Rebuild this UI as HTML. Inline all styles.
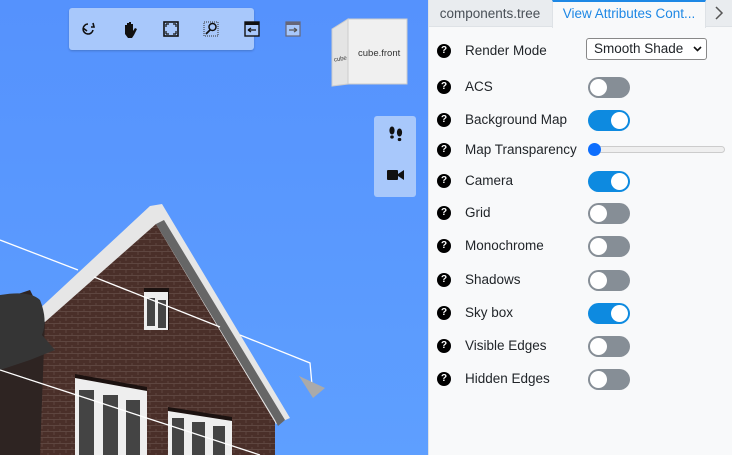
<!DOCTYPE html>
<html><head><meta charset="utf-8">
<style>
*{box-sizing:border-box;margin:0;padding:0}
body{width:732px;height:455px;overflow:hidden;font-family:"Liberation Sans",sans-serif;position:relative;background:#fff}
#vp{position:absolute;left:0;top:0;width:428px;height:455px;background:linear-gradient(#5592fd,#5e9fff);overflow:hidden}
#panel{position:absolute;left:428px;top:0;width:304px;height:455px;background:#f8f9fa;border-left:1px solid #dee2e6}
.tb{position:absolute;left:69px;top:8px;width:185px;height:42px;background:#a8c8fb;border-radius:3px;box-shadow:0 1px 2px rgba(0,0,0,.2)}
.tb svg{position:absolute;top:13px}
.side{position:absolute;left:374px;top:116px;width:42px;height:81px;background:#a8c8fb;border-radius:3px}
.tabs{height:27px;position:relative;border-bottom:1px solid #dee2e6;background:#e9ecef}
.tab1{position:absolute;left:0;top:0;width:122px;height:27px;font-size:13.5px;color:#495057;text-align:center;line-height:27px}
.tab2{position:absolute;left:123px;top:0;width:154px;height:28px;background:#f8f9fa;border-top:2px solid #1e88e5;border-left:1px solid #dee2e6;border-right:1px solid #dee2e6;font-size:13.5px;color:#1e88e5;text-align:center;line-height:24px}
.arr{position:absolute;left:285px;top:5px}
.row{position:absolute;left:0;width:304px;height:22px}
.q{position:absolute;left:8px;top:4px;width:14px;height:14px;border-radius:50%;background:#000;color:#fff;font-size:10px;font-weight:bold;text-align:center;line-height:14px}
.lb{position:absolute;left:36px;top:3px;font-size:13.5px;color:#212529}
.tg{position:absolute;left:159px;top:1px;width:42px;height:21px;border-radius:11px;background:#868e96}
.tg::after{content:"";position:absolute;left:2px;top:2px;width:17px;height:17px;border-radius:50%;background:#fff}
.tg.on{background:#0d8ae0}
.tg.on::after{left:23px}
.sel{position:absolute;left:157px;top:-2px;width:121px;height:22px;border:1px solid #888;border-radius:3px;background:#fff;font-size:13.5px;line-height:20px;padding-left:7px;color:#212529}
</style></head><body>
<div id="vp">
<svg width="428" height="455" style="position:absolute;left:0;top:0">
<defs>
<pattern id="br" width="12" height="6" patternUnits="userSpaceOnUse">
<rect width="12" height="6" fill="#4a2f29"/>
<path d="M0 5.5H12M6 0V3M0 3V6M12 3V6" stroke="#5e4640" stroke-width="1"/>
</pattern>
</defs>
<polygon points="155,218 45,320 30,455 275,455 275,420" fill="url(#br)"/>
<polygon points="0,300 30,290 45,320 40,455 0,455" fill="#2e2422"/>
<polygon points="150,206 162,204 290,418 276,424 156,224 45,322 36,312" fill="#e6e6e6"/>
<polygon points="156,224 164,220 285,420 278,426 275,420" fill="#666"/>
<path d="M0 295 Q30 290 40 300 Q48 320 42 335 L55 350 L30 360 L0 370Z" fill="#353535"/>
<g>
<rect x="144" y="288" width="25" height="42" fill="#1c1210"/>
<rect x="144" y="292" width="24" height="38" fill="#eee"/>
<rect x="147" y="298" width="8" height="28" fill="#444"/><rect x="158" y="300" width="8" height="28" fill="#444"/>
</g>
<g>
<polygon points="75,377 147,390 147,455 75,455" fill="#eee"/>
<polygon points="75,374 147,387 147,391 75,378" fill="#1c1210"/>
<rect x="79" y="390" width="15" height="65" fill="#444"/><rect x="103" y="395" width="15" height="60" fill="#444"/><rect x="126" y="400" width="14" height="55" fill="#444"/>
<polygon points="168,410 232,420 232,455 168,455" fill="#eee"/>
<polygon points="168,407 232,417 232,421 168,411" fill="#1c1210"/>
<rect x="172" y="418" width="12" height="37" fill="#444"/><rect x="192" y="422" width="13" height="33" fill="#444"/><rect x="213" y="426" width="12" height="29" fill="#444"/>
</g>
<polyline points="0,240 78,270" stroke="#fff" stroke-width="1.3" fill="none"/>
<polyline points="94,277 220,327" stroke="#fff" stroke-width="1.3" fill="none"/>
<polyline points="240,335 310,363 312,385" stroke="#fff" stroke-width="1.3" fill="none"/>
<polyline points="0,370 260,455" stroke="#fff" stroke-width="1.3" fill="none"/>
<polygon points="299,376 325,388 313,398" fill="#aaa"/>
</svg>
<div class="tb">
<svg style="left:12px" width="16" height="16" viewBox="0 0 16 16"><path d="M7 3a5 5 0 1 0 5 6M2 7l4 3M12 2l1 4-3 0" stroke="#111" stroke-width="1.6" fill="none"/></svg>
<svg style="left:53px" width="16" height="17" viewBox="0 0 16 17"><path d="M3 9V4h2v4V2h2v6V1h2v7V3h2v7l2-3 2 1-3 6-2 3H6L3 13z" fill="#111"/></svg>
<svg style="left:94px" width="16" height="16" viewBox="0 0 16 16"><rect x="1" y="1" width="14" height="14" fill="none" stroke="#111" stroke-width="1.6"/><path d="M3 3h3M3 3v3M13 3h-3M13 3v3M3 13h3M3 13v-3M13 13h-3M13 13v-3" stroke="#111" stroke-width="1.2"/></svg>
<svg style="left:134px" width="16" height="16" viewBox="0 0 16 16"><rect x="1" y="1" width="14" height="14" fill="none" stroke="#333" stroke-dasharray="1 1"/><circle cx="9.5" cy="6" r="3.5" fill="none" stroke="#111" stroke-width="1.5"/><path d="M7 9L3 13" stroke="#111" stroke-width="1.8"/></svg>
<svg style="left:175px" width="16" height="16" viewBox="0 0 16 16"><rect x="1" y="1" width="14" height="14" fill="#a8c8fb" stroke="#111" stroke-width="1.4"/><rect x="1" y="1" width="14" height="3" fill="#111"/><path d="M4 9h8M4 9l3-2M4 9l3 2" stroke="#111" stroke-width="1.3"/></svg>
<svg style="left:216px" width="16" height="16" viewBox="0 0 16 16"><rect x="1" y="1" width="14" height="14" fill="#a8c8fb" stroke="#667" stroke-width="1.2"/><rect x="1" y="1" width="14" height="3" fill="#667"/><path d="M4 9h8M12 9l-3-2M12 9l-3 2" stroke="#555" stroke-width="1.3"/></svg>
</div>
<svg style="position:absolute;left:330px;top:17px" width="90" height="70">
<polygon points="2,12 18,2 18,67 2,69" fill="#e4e4e4" stroke="#ccc"/>
<rect x="18" y="2" width="59" height="65" fill="#f0f0f0" stroke="#ccc"/>
<text x="28" y="39" font-family="Liberation Sans" font-size="9.5" fill="#333">cube.front</text>
<text x="4" y="44" font-family="Liberation Sans" font-size="6" fill="#333" transform="rotate(-10 8 43)">cube</text>
</svg>
<div class="side">
<svg style="position:absolute;left:14px;top:10px" width="16" height="16" viewBox="0 0 16 16"><ellipse cx="4" cy="4.5" rx="2.6" ry="4" fill="#111"/><ellipse cx="11.5" cy="6.5" rx="2.6" ry="4" fill="#111"/><ellipse cx="4" cy="11" rx="1.8" ry="1.6" fill="#111"/><ellipse cx="11.5" cy="13.5" rx="1.8" ry="1.6" fill="#111"/></svg>
<svg style="position:absolute;left:13px;top:53px" width="17" height="12" viewBox="0 0 17 12"><rect x="0" y="1" width="11" height="10" rx="1" fill="#111"/><polygon points="11,5 17,1 17,11 11,7" fill="#111"/></svg>
</div>
</div>
<div id="panel">
<div class="tabs"><div class="tab1">components.tree</div><div class="tab2">View Attributes Cont...</div>
<svg class="arr" width="10" height="16" viewBox="0 0 10 16"><path d="M2 2l6 6-6 6" stroke="#555" stroke-width="1.5" fill="none"/></svg></div>
<div class="row" style="top:40px"><div class="q">?</div><div class="lb">Render Mode</div><div class="sel">Smooth Shade <svg style="position:absolute;right:4px;top:7px" width="9" height="6" viewBox="0 0 9 6"><path d="M1 1l3.5 3.5L8 1" stroke="#111" stroke-width="1.6" fill="none"/></svg></div></div>
<div class="row" style="top:76px"><div class="q">?</div><div class="lb">ACS</div><div class="tg"></div></div>
<div class="row" style="top:109px"><div class="q">?</div><div class="lb">Background Map</div><div class="tg on"></div></div>
<div class="row" style="top:139px"><div class="q">?</div><div class="lb">Map Transparency</div>
<div style="position:absolute;left:162px;top:7px;width:134px;height:7px;border:1px solid #ccc;border-radius:4px;background:#efefef"></div>
<div style="position:absolute;left:159px;top:4px;width:13px;height:13px;border-radius:50%;background:#0d6efd"></div></div>
<div class="row" style="top:170px"><div class="q">?</div><div class="lb">Camera</div><div class="tg on"></div></div>
<div class="row" style="top:202px"><div class="q">?</div><div class="lb">Grid</div><div class="tg"></div></div>
<div class="row" style="top:235px"><div class="q">?</div><div class="lb">Monochrome</div><div class="tg"></div></div>
<div class="row" style="top:269px"><div class="q">?</div><div class="lb">Shadows</div><div class="tg"></div></div>
<div class="row" style="top:302px"><div class="q">?</div><div class="lb">Sky box</div><div class="tg on"></div></div>
<div class="row" style="top:335px"><div class="q">?</div><div class="lb">Visible Edges</div><div class="tg"></div></div>
<div class="row" style="top:368px"><div class="q">?</div><div class="lb">Hidden Edges</div><div class="tg"></div></div>
</div>
</body></html>
